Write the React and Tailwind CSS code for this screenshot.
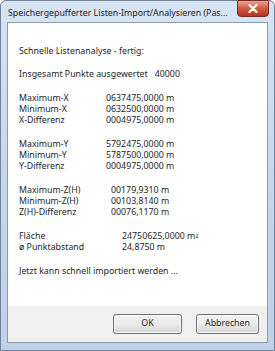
import React from 'react';

const font = { fontFamily: '"Segoe UI", "Noto Sans", "Open Sans", sans-serif' };

function Row({ label, value, indent = 'pl-0' }) {
    return (
        <div className="flex h-[11px] items-center leading-[11px]">
            <span className="w-[87px] shrink-0">{label}</span>
            <span className={indent}>{value}</span>
        </div>
    );
}

export default function App() {
    return (
        <div
            className="w-[275px] h-[351px] flex flex-col rounded-t-[6px] border border-[#6f8299] bg-gradient-to-b from-[#d6e4f4] via-[#c6d7ec] to-[#bed1e8] text-[#1e1e1e]"
            style={font}
        >
            {/* title bar */}
            <div className="h-[21px] flex items-start pl-[7px] pr-[5px] shrink-0">
                <div className="flex-1 min-w-0 overflow-hidden whitespace-nowrap text-[8.8px] leading-[11px] mt-[7px]">
                    Speichergepufferter Listen-Import/Analysieren (Pas...
                </div>
                <div className="w-[32px] h-[17px] -mt-px ml-[4px] shrink-0 flex items-center justify-center rounded-b-[4px] border border-[#7a2a22] bg-gradient-to-b from-[#e5a596] via-[#cf5b44] to-[#b8321f]">
                    <svg width="10" height="9" viewBox="0 0 10 9">
                        <path d="M1.5 1 L8.5 8 M8.5 1 L1.5 8" stroke="#fff" strokeWidth="2.2" strokeLinecap="round" />
                    </svg>
                </div>
            </div>

            {/* client */}
            <div className="flex-1 mx-[6px] mb-[7px] border border-[#8a9db5] flex flex-col bg-[#f0f0f0]">
                <div className="flex-1 bg-white pl-[11px] pt-[23px] text-[8.8px] leading-[11px]">
                    <div className="h-[11px] flex items-center">Schnelle Listenanalyse - fertig:</div>
                    <div className="h-[11px] flex items-center mt-[12px]">
                        Insgesamt Punkte ausgewertet<span className="ml-[7px]">40000</span>
                    </div>

                    <div className="mt-[13px]">
                        <Row label="Maximum-X" value="0637475,0000 m" />
                        <Row label="Minimum-X" value="0632500,0000 m" />
                        <Row label="X-Differenz" value="0004975,0000 m" />
                    </div>
                    <div className="mt-[13px]">
                        <Row label="Maximum-Y" value="5792475,0000 m" />
                        <Row label="Minimum-Y" value="5787500,0000 m" />
                        <Row label="Y-Differenz" value="0004975,0000 m" />
                    </div>
                    <div className="mt-[13px]">
                        <Row label="Maximum-Z(H)" value="00179,9310 m" indent="pl-[5px]" />
                        <Row label="Minimum-Z(H)" value="00103,8140 m" indent="pl-[5px]" />
                        <Row label="Z(H)-Differenz" value="00076,1170 m" indent="pl-[5px]" />
                    </div>
                    <div className="mt-[13px]">
                        <Row
                            label="Fläche"
                            value={<>24750625,0000 m<sup className="text-[6px] relative -top-[1px]">2</sup></>}
                            indent="pl-[16px]"
                        />
                        <Row label="ø Punktabstand" value="24,8750 m" indent="pl-[16px]" />
                    </div>
                    <div className="h-[11px] flex items-center mt-[13px]">Jetzt kann schnell importiert werden ...</div>
                </div>

                {/* button strip */}
                <div className="h-[36px] shrink-0 flex items-center justify-end gap-[14px] pr-[8px] text-[8.8px]">
                    <button className="w-[69px] h-[20px] rounded-[3px] border border-[#707070] bg-gradient-to-b from-[#f2f2f2] via-[#ebebeb] to-[#d4d4d4] shadow-[inset_0_0_0_1px_#fcfcfc]">
                        OK
                    </button>
                    <button className="w-[63px] h-[20px] rounded-[3px] border border-[#707070] bg-gradient-to-b from-[#f2f2f2] via-[#ebebeb] to-[#d4d4d4] shadow-[inset_0_0_0_1px_#fcfcfc]">
                        Abbrechen
                    </button>
                </div>
            </div>
        </div>
    );
}
